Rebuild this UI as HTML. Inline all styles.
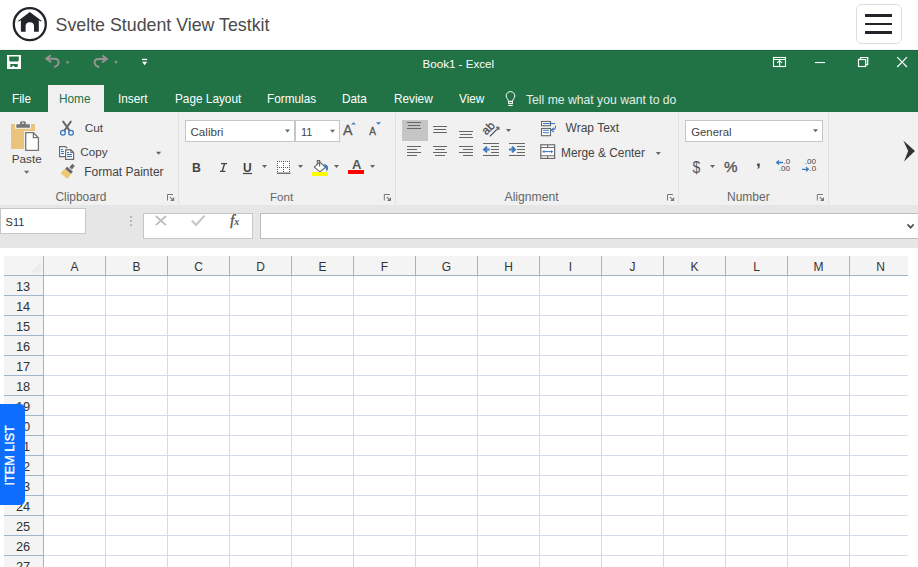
<!DOCTYPE html>
<html><head><meta charset="utf-8"><style>
html,body{margin:0;padding:0;width:918px;height:567px;overflow:hidden;background:#fff;position:relative;font-family:"Liberation Sans", sans-serif;}
.t{position:absolute;white-space:pre;line-height:1;font-family:"Liberation Sans", sans-serif;}
svg{overflow:visible}
</style></head><body>
<svg style="position:absolute;left:12px;top:7px" width="36" height="36" viewBox="0 0 36 36"><circle cx="17.8" cy="17.2" r="16" fill="none" stroke="#212529" stroke-width="2.3"/><path d="M5.6 14.2 L17.8 5 L30.2 14.2 L28.2 14.2 L26.8 13.2 L26.8 24.8 L22 24.8 L22 19 Q22 15.2 17.8 15.2 Q13.6 15.2 13.6 19 L13.6 24.8 L8.9 24.8 L8.9 13.2 L7.4 14.2 Z" fill="#212529"/></svg>
<div class="t" style="left:55.6px;top:16.93px;font-size:17.8px;color:#4a4a4a;">Svelte Student View Testkit</div>
<div style="position:absolute;left:856px;top:4px;width:44px;height:38px;border:1px solid #dcdcdc;border-radius:6px;"></div>
<div style="position:absolute;left:865px;top:14.0px;width:27px;height:2.6px;background:#212529;"></div>
<div style="position:absolute;left:865px;top:22.5px;width:27px;height:2.6px;background:#212529;"></div>
<div style="position:absolute;left:865px;top:30.999999999999996px;width:27px;height:2.6px;background:#212529;"></div>
<div style="position:absolute;left:0px;top:50px;width:918px;height:62px;background:#217346;"></div>
<div style="position:absolute;left:0px;top:50px;width:918px;height:1px;background:#1b6a3d;"></div>
<div style="position:absolute;left:0px;top:49px;width:918px;height:1px;background:#f3f3f6;"></div>
<div class="t" style="left:422.5px;top:57.78px;font-size:11.6px;color:#fff;">Book1 - Excel</div>
<div style="position:absolute;left:48px;top:85px;width:56px;height:27px;background:#f1f1f1;"></div>
<div class="t" style="left:11.7px;top:93.38px;font-size:12.9px;color:#fff;transform:scaleX(0.915);transform-origin:0 0;">File</div>
<div class="t" style="left:58.7px;top:93.38px;font-size:12.9px;color:#217346;transform:scaleX(0.915);transform-origin:0 0;">Home</div>
<div class="t" style="left:117.7px;top:93.38px;font-size:12.9px;color:#fff;transform:scaleX(0.915);transform-origin:0 0;">Insert</div>
<div class="t" style="left:174.7px;top:93.38px;font-size:12.9px;color:#fff;transform:scaleX(0.915);transform-origin:0 0;">Page Layout</div>
<div class="t" style="left:266.7px;top:93.38px;font-size:12.9px;color:#fff;transform:scaleX(0.915);transform-origin:0 0;">Formulas</div>
<div class="t" style="left:341.7px;top:93.38px;font-size:12.9px;color:#fff;transform:scaleX(0.915);transform-origin:0 0;">Data</div>
<div class="t" style="left:393.7px;top:93.38px;font-size:12.9px;color:#fff;transform:scaleX(0.915);transform-origin:0 0;">Review</div>
<div class="t" style="left:458.5px;top:93.38px;font-size:12.9px;color:#fff;transform:scaleX(0.915);transform-origin:0 0;">View</div>
<div class="t" style="left:526.0px;top:93.87px;font-size:12.2px;color:#e3ede7;">Tell me what you want to do</div>
<div style="position:absolute;left:0px;top:112px;width:918px;height:93px;background:#f1f1f1;"></div>
<div style="position:absolute;left:178px;top:113px;width:1px;height:91px;background:#e1e1e1;"></div>
<div style="position:absolute;left:395px;top:113px;width:1px;height:91px;background:#e1e1e1;"></div>
<div style="position:absolute;left:678px;top:113px;width:1px;height:91px;background:#e1e1e1;"></div>
<div style="position:absolute;left:828px;top:113px;width:1px;height:91px;background:#e1e1e1;"></div>
<div class="t" style="left:55.5px;top:191.83px;font-size:11.9px;color:#666;">Clipboard</div>
<div class="t" style="left:270.0px;top:190.88px;font-size:11.6px;color:#666;">Font</div>
<div class="t" style="left:504.5px;top:190.57px;font-size:12.2px;color:#666;">Alignment</div>
<div class="t" style="left:727.0px;top:190.94px;font-size:12px;color:#666;">Number</div>
<div class="t" style="left:11.8px;top:152.90px;font-size:11.7px;color:#444;">Paste</div>
<div class="t" style="left:84.7px;top:122.81px;font-size:11.8px;color:#444;">Cut</div>
<div class="t" style="left:80.3px;top:145.70px;font-size:11.7px;color:#444;">Copy</div>
<div class="t" style="left:84.2px;top:165.54px;font-size:12px;color:#444;">Format Painter</div>
<div style="position:absolute;left:185px;top:120px;width:110px;height:22px;background:#fff;border:1px solid #c6c6c6;box-sizing:border-box;"></div>
<div style="position:absolute;left:295px;top:120px;width:45px;height:22px;background:#fff;border:1px solid #c6c6c6;box-sizing:border-box;"></div>
<div class="t" style="left:190.5px;top:125.98px;font-size:11.6px;color:#444;">Calibri</div>
<div class="t" style="left:301.0px;top:127.09px;font-size:11px;color:#444;">11</div>
<div class="t" style="left:565.6px;top:121.84px;font-size:12px;color:#444;">Wrap Text</div>
<div class="t" style="left:561.0px;top:147.93px;font-size:11.9px;color:#444;">Merge &amp; Center</div>
<div style="position:absolute;left:685px;top:120px;width:138px;height:22px;background:#fff;border:1px solid #c6c6c6;box-sizing:border-box;"></div>
<div class="t" style="left:691.3px;top:127.33px;font-size:11.3px;color:#444;">General</div>
<div style="position:absolute;left:0px;top:205px;width:918px;height:43px;background:#e6e6e6;"></div>
<div style="position:absolute;left:0px;top:208px;width:86px;height:26px;background:#fff;border:1px solid #c6c6c6;box-sizing:border-box;"></div>
<div class="t" style="left:5.6px;top:216.59px;font-size:11px;color:#333;">S11</div>
<div style="position:absolute;left:143px;top:213px;width:110px;height:26px;background:#fff;border:1px solid #c6c6c6;box-sizing:border-box;"></div>
<div style="position:absolute;left:260px;top:213px;width:670px;height:26px;background:#fff;border:1px solid #bdbdbd;box-sizing:border-box;"></div>
<div style="position:absolute;left:4px;top:256px;width:904px;height:20px;background:#f4f4f4;"></div>
<div style="position:absolute;left:4px;top:276px;width:40px;height:300px;background:#f4f4f4;"></div>
<div style="position:absolute;left:4px;top:275px;width:904px;height:1px;background:#9fb5cf;"></div>
<div style="position:absolute;left:4px;top:295px;width:40px;height:1px;background:#9fb5cf;"></div>
<div style="position:absolute;left:44px;top:295px;width:864px;height:1px;background:#d3dbe7;"></div>
<div style="position:absolute;left:4px;top:315px;width:40px;height:1px;background:#9fb5cf;"></div>
<div style="position:absolute;left:44px;top:315px;width:864px;height:1px;background:#d3dbe7;"></div>
<div style="position:absolute;left:4px;top:335px;width:40px;height:1px;background:#9fb5cf;"></div>
<div style="position:absolute;left:44px;top:335px;width:864px;height:1px;background:#d3dbe7;"></div>
<div style="position:absolute;left:4px;top:355px;width:40px;height:1px;background:#9fb5cf;"></div>
<div style="position:absolute;left:44px;top:355px;width:864px;height:1px;background:#d3dbe7;"></div>
<div style="position:absolute;left:4px;top:375px;width:40px;height:1px;background:#9fb5cf;"></div>
<div style="position:absolute;left:44px;top:375px;width:864px;height:1px;background:#d3dbe7;"></div>
<div style="position:absolute;left:4px;top:395px;width:40px;height:1px;background:#9fb5cf;"></div>
<div style="position:absolute;left:44px;top:395px;width:864px;height:1px;background:#d3dbe7;"></div>
<div style="position:absolute;left:4px;top:415px;width:40px;height:1px;background:#9fb5cf;"></div>
<div style="position:absolute;left:44px;top:415px;width:864px;height:1px;background:#d3dbe7;"></div>
<div style="position:absolute;left:4px;top:435px;width:40px;height:1px;background:#9fb5cf;"></div>
<div style="position:absolute;left:44px;top:435px;width:864px;height:1px;background:#d3dbe7;"></div>
<div style="position:absolute;left:4px;top:455px;width:40px;height:1px;background:#9fb5cf;"></div>
<div style="position:absolute;left:44px;top:455px;width:864px;height:1px;background:#d3dbe7;"></div>
<div style="position:absolute;left:4px;top:475px;width:40px;height:1px;background:#9fb5cf;"></div>
<div style="position:absolute;left:44px;top:475px;width:864px;height:1px;background:#d3dbe7;"></div>
<div style="position:absolute;left:4px;top:495px;width:40px;height:1px;background:#9fb5cf;"></div>
<div style="position:absolute;left:44px;top:495px;width:864px;height:1px;background:#d3dbe7;"></div>
<div style="position:absolute;left:4px;top:515px;width:40px;height:1px;background:#9fb5cf;"></div>
<div style="position:absolute;left:44px;top:515px;width:864px;height:1px;background:#d3dbe7;"></div>
<div style="position:absolute;left:4px;top:535px;width:40px;height:1px;background:#9fb5cf;"></div>
<div style="position:absolute;left:44px;top:535px;width:864px;height:1px;background:#d3dbe7;"></div>
<div style="position:absolute;left:4px;top:555px;width:40px;height:1px;background:#9fb5cf;"></div>
<div style="position:absolute;left:44px;top:555px;width:864px;height:1px;background:#d3dbe7;"></div>
<div style="position:absolute;left:43px;top:256px;width:1px;height:320px;background:#9fb5cf;"></div>
<div style="position:absolute;left:105px;top:256px;width:1px;height:20px;background:#9fb5cf;"></div>
<div style="position:absolute;left:105px;top:276px;width:1px;height:300px;background:#d3dbe7;"></div>
<div style="position:absolute;left:167px;top:256px;width:1px;height:20px;background:#9fb5cf;"></div>
<div style="position:absolute;left:167px;top:276px;width:1px;height:300px;background:#d3dbe7;"></div>
<div style="position:absolute;left:229px;top:256px;width:1px;height:20px;background:#9fb5cf;"></div>
<div style="position:absolute;left:229px;top:276px;width:1px;height:300px;background:#d3dbe7;"></div>
<div style="position:absolute;left:291px;top:256px;width:1px;height:20px;background:#9fb5cf;"></div>
<div style="position:absolute;left:291px;top:276px;width:1px;height:300px;background:#d3dbe7;"></div>
<div style="position:absolute;left:353px;top:256px;width:1px;height:20px;background:#9fb5cf;"></div>
<div style="position:absolute;left:353px;top:276px;width:1px;height:300px;background:#d3dbe7;"></div>
<div style="position:absolute;left:415px;top:256px;width:1px;height:20px;background:#9fb5cf;"></div>
<div style="position:absolute;left:415px;top:276px;width:1px;height:300px;background:#d3dbe7;"></div>
<div style="position:absolute;left:477px;top:256px;width:1px;height:20px;background:#9fb5cf;"></div>
<div style="position:absolute;left:477px;top:276px;width:1px;height:300px;background:#d3dbe7;"></div>
<div style="position:absolute;left:539px;top:256px;width:1px;height:20px;background:#9fb5cf;"></div>
<div style="position:absolute;left:539px;top:276px;width:1px;height:300px;background:#d3dbe7;"></div>
<div style="position:absolute;left:601px;top:256px;width:1px;height:20px;background:#9fb5cf;"></div>
<div style="position:absolute;left:601px;top:276px;width:1px;height:300px;background:#d3dbe7;"></div>
<div style="position:absolute;left:663px;top:256px;width:1px;height:20px;background:#9fb5cf;"></div>
<div style="position:absolute;left:663px;top:276px;width:1px;height:300px;background:#d3dbe7;"></div>
<div style="position:absolute;left:725px;top:256px;width:1px;height:20px;background:#9fb5cf;"></div>
<div style="position:absolute;left:725px;top:276px;width:1px;height:300px;background:#d3dbe7;"></div>
<div style="position:absolute;left:787px;top:256px;width:1px;height:20px;background:#9fb5cf;"></div>
<div style="position:absolute;left:787px;top:276px;width:1px;height:300px;background:#d3dbe7;"></div>
<div style="position:absolute;left:849px;top:256px;width:1px;height:20px;background:#9fb5cf;"></div>
<div style="position:absolute;left:849px;top:276px;width:1px;height:300px;background:#d3dbe7;"></div>
<div class="t" style="left:54.5px;width:40px;text-align:center;top:260.74px;font-size:12px;color:#333">A</div>
<div class="t" style="left:116.5px;width:40px;text-align:center;top:260.74px;font-size:12px;color:#333">B</div>
<div class="t" style="left:178.5px;width:40px;text-align:center;top:260.74px;font-size:12px;color:#333">C</div>
<div class="t" style="left:240.5px;width:40px;text-align:center;top:260.74px;font-size:12px;color:#333">D</div>
<div class="t" style="left:302.5px;width:40px;text-align:center;top:260.74px;font-size:12px;color:#333">E</div>
<div class="t" style="left:364.5px;width:40px;text-align:center;top:260.74px;font-size:12px;color:#333">F</div>
<div class="t" style="left:426.5px;width:40px;text-align:center;top:260.74px;font-size:12px;color:#333">G</div>
<div class="t" style="left:488.5px;width:40px;text-align:center;top:260.74px;font-size:12px;color:#333">H</div>
<div class="t" style="left:550.5px;width:40px;text-align:center;top:260.74px;font-size:12px;color:#333">I</div>
<div class="t" style="left:612.5px;width:40px;text-align:center;top:260.74px;font-size:12px;color:#333">J</div>
<div class="t" style="left:674.5px;width:40px;text-align:center;top:260.74px;font-size:12px;color:#333">K</div>
<div class="t" style="left:736.5px;width:40px;text-align:center;top:260.74px;font-size:12px;color:#333">L</div>
<div class="t" style="left:798.5px;width:40px;text-align:center;top:260.74px;font-size:12px;color:#333">M</div>
<div class="t" style="left:860.5px;width:40px;text-align:center;top:260.74px;font-size:12px;color:#333">N</div>
<div class="t" style="left:3px;width:40px;text-align:center;top:281.06px;font-size:12.8px;color:#333">13</div>
<div class="t" style="left:3px;width:40px;text-align:center;top:301.06px;font-size:12.8px;color:#333">14</div>
<div class="t" style="left:3px;width:40px;text-align:center;top:321.06px;font-size:12.8px;color:#333">15</div>
<div class="t" style="left:3px;width:40px;text-align:center;top:341.06px;font-size:12.8px;color:#333">16</div>
<div class="t" style="left:3px;width:40px;text-align:center;top:361.06px;font-size:12.8px;color:#333">17</div>
<div class="t" style="left:3px;width:40px;text-align:center;top:381.06px;font-size:12.8px;color:#333">18</div>
<div class="t" style="left:3px;width:40px;text-align:center;top:401.06px;font-size:12.8px;color:#333">19</div>
<div class="t" style="left:3px;width:40px;text-align:center;top:421.06px;font-size:12.8px;color:#333">20</div>
<div class="t" style="left:3px;width:40px;text-align:center;top:441.06px;font-size:12.8px;color:#333">21</div>
<div class="t" style="left:3px;width:40px;text-align:center;top:461.06px;font-size:12.8px;color:#333">22</div>
<div class="t" style="left:3px;width:40px;text-align:center;top:481.06px;font-size:12.8px;color:#333">23</div>
<div class="t" style="left:3px;width:40px;text-align:center;top:501.06px;font-size:12.8px;color:#333">24</div>
<div class="t" style="left:3px;width:40px;text-align:center;top:521.06px;font-size:12.8px;color:#333">25</div>
<div class="t" style="left:3px;width:40px;text-align:center;top:541.06px;font-size:12.8px;color:#333">26</div>
<div class="t" style="left:3px;width:40px;text-align:center;top:561.06px;font-size:12.8px;color:#333">27</div>
<div class="t" style="left:191.9px;top:162.19px;font-size:12.3px;color:#444;font-weight:bold;">B</div>
<div class="t" style="left:242.9px;top:161.64px;font-size:12px;color:#444;font-weight:bold;">U</div>
<div class="t" style="left:343.1px;top:122.78px;font-size:14.2px;color:#555;-webkit-text-stroke:0.3px #555;">A</div>
<div class="t" style="left:369.2px;top:127.03px;font-size:10px;color:#555;-webkit-text-stroke:0.3px #555;">A</div>
<div class="t" style="left:352.0px;top:158.30px;font-size:13px;color:#555;font-weight:bold;">A</div>
<div class="t" style="left:692.4px;top:160.55px;font-size:14px;color:#555;transform:scaleY(1.15);transform-origin:50% 85%;">$</div>
<div class="t" style="left:724.0px;top:159.23px;font-size:15.2px;color:#555;-webkit-text-stroke:0.35px #555;">%</div>
<div class="t" style="left:756.0px;top:152.01px;font-size:17px;color:#444;font-weight:bold;">,</div>
<div class="t" style="left:783.5px;top:157.83px;font-size:8px;color:#444;">.0</div>
<div class="t" style="left:778.8px;top:164.93px;font-size:8px;color:#444;">.00</div>
<div class="t" style="left:804.8px;top:157.83px;font-size:8px;color:#444;">.00</div>
<div class="t" style="left:809.6px;top:164.93px;font-size:8px;color:#444;">.0</div>
<div class="t" style="left:230.3px;top:214.15px;font-size:14px;color:#555;font-family:'Liberation Serif',serif;-webkit-text-stroke:0.45px #555;"><i>f</i></div>
<div class="t" style="left:234.2px;top:216.53px;font-size:10px;color:#555;font-family:'Liberation Serif',serif;font-weight:bold;"><i>x</i></div>
<svg style="position:absolute;left:0;top:0" width="918" height="567" viewBox="0 0 918 567"><path fill-rule="evenodd" fill="#fff" d="M7 55H21V69H7Z M9.2 56.6H18.8V60.6L17.9 61.5H10.1L9.2 60.6Z M10.3 64H17.7V67H14.3V65.8H12.3V67H10.3Z"/><path d="M46.5 58.7H55Q58.6 58.7 58.6 62.4Q58.6 65.6 54 67" fill="none" stroke="#9a9296" stroke-width="2"/><path d="M50.8 55.3L46.4 58.7L51.2 62.3" fill="none" stroke="#9a9296" stroke-width="2"/><g transform="matrix(-1 0 0 1 153.2 0.2)"><path d="M46.5 58.7H55Q58.6 58.7 58.6 62.4Q58.6 65.6 54 67" fill="none" stroke="#9a9296" stroke-width="2"/><path d="M50.8 55.3L46.4 58.7L51.2 62.3" fill="none" stroke="#9a9296" stroke-width="2"/></g><path d="M66 61.3H69.2L67.6 64.6Z" fill="#9a9296"/><path d="M114.4 61H117.80000000000001L116.10000000000001 64Z" fill="#9a9296"/><rect x="142" y="58.8" width="5.2" height="1.3" fill="#fff"/><path d="M142 61.8H147.2L144.6 65.2Z" fill="#fff"/><rect x="773.5" y="57.5" width="12" height="9" fill="none" stroke="#fff" stroke-width="1.1"/><path d="M773.5 59.5H785.5M779.6 60.5V66.5M777.2 62.8L779.6 60.5L782 62.8" fill="none" stroke="#fff" stroke-width="1.1"/><rect x="815" y="62" width="10" height="1.1" fill="#fff"/><rect x="858.5" y="59.5" width="7.2" height="7" fill="none" stroke="#fff" stroke-width="1.2"/><path d="M860.5 59.3V57.5H867.7V64.6H865.9" fill="none" stroke="#fff" stroke-width="1.2"/><path d="M897.2 57.2L907 67M907 57.2L897.2 67" stroke="#fff" stroke-width="1.2"/><path d="M508.6 101.3C508.2 99.4 506.2 97.8 506.2 95.9A4.3 4.3 0 1 1 514.8 95.9C514.8 97.8 512.8 99.4 512.4 101.3Z" fill="none" stroke="#fff" stroke-width="1"/><rect x="508.6" y="101.6" width="3.8" height="2" fill="none" stroke="#fff" stroke-width="1"/><path d="M508.3 105.5H512.7" stroke="#fff" stroke-width="1.1"/><rect x="11" y="124" width="24" height="25" rx="1.2" fill="#ebc47c"/><rect x="15" y="122" width="16" height="6.8" fill="#f1f1f1"/><rect x="16.3" y="124.3" width="13.6" height="3.5" rx="0.6" fill="#757575"/><rect x="20" y="121.2" width="5.8" height="4" rx="1.6" fill="#757575"/><circle cx="22.9" cy="123.2" r="0.9" fill="#f1f1f1"/><rect x="24" y="131" width="16.3" height="21" fill="#f1f1f1"/><path d="M25.7 132.7H33.4L38.4 137.7V150.4H25.7Z" fill="#fff" stroke="#767676" stroke-width="1.3"/><path d="M33.4 132.7V137.7H38.4" fill="none" stroke="#767676" stroke-width="1.3"/><path d="M24 170.8H29.3L26.65 173.8Z" fill="#666"/><path d="M63.2 121.6L69.6 130.6M70.8 121.6L64.4 130.6" stroke="#676767" stroke-width="1.9" stroke-linecap="round"/><circle cx="62.9" cy="132.8" r="2.35" fill="none" stroke="#3b79c2" stroke-width="1.3"/><circle cx="71" cy="132.8" r="2.35" fill="none" stroke="#3b79c2" stroke-width="1.3"/><path d="M65.5 156.6H59.6V146.6H65.5L67.3 148.4" fill="#fff" stroke="#6a6a6a" stroke-width="1.2"/><path d="M65.6 149.8H70.9L73.6 152.5V159.3H65.6Z" fill="#fff" stroke="#6a6a6a" stroke-width="1.2"/><path d="M70.9 149.8V152.5H73.6" fill="none" stroke="#6a6a6a" stroke-width="1.2"/><rect x="61" y="149" width="2.200000000000003" height="1.1" fill="#3b79c2"/><rect x="61" y="151" width="3" height="1.1" fill="#3b79c2"/><rect x="61" y="153" width="3" height="1.1" fill="#3b79c2"/><rect x="67" y="152" width="2" height="1.1" fill="#3b79c2"/><rect x="67" y="154" width="5" height="1.1" fill="#3b79c2"/><rect x="67" y="156" width="5" height="1.1" fill="#3b79c2"/><path d="M156 151.8H161.2L158.6 154.8Z" fill="#666"/><g transform="rotate(40 69 170.3)"><rect x="67.4" y="163.2" width="3.2" height="4.6" fill="#6a6a6a"/><rect x="65.2" y="168.8" width="7.6" height="3.1" fill="#6a6a6a"/><path d="M64.6 172.4H73.2V178.2L72.1 177.6L71 178.2L69.9 177.6L68.8 178.2L67.7 177.6L66.6 178.2L65.5 177.6L64.6 178.2Z" fill="#f0c66c"/></g><path d="M167.5 200.5V194.5H173" fill="none" stroke="#777" stroke-width="1"/><path d="M170 197.2L173 200.2" stroke="#777" stroke-width="1.1"/><path d="M174.2 197V201H170.2Z" fill="#777"/><path d="M285 129.5H290L287.5 132.5Z" fill="#666"/><path d="M330 129.7H335L332.5 132.7Z" fill="#666"/><path d="M351 124.6H356L353.5 122.2Z" fill="#3b79c2"/><path d="M376 122.2H381L378.5 124.8Z" fill="#3b79c2"/><path d="M221 163.6H227M220 171.4H225.3M224.6 163.6L222.2 171.4" fill="none" stroke="#444" stroke-width="1.4"/><rect x="243" y="172.9" width="9" height="1.2" fill="#444"/><path d="M262 165H267L264.5 168Z" fill="#666"/><path d="M298 165H303L300.5 168Z" fill="#666"/><path d="M334 165.1H339L336.5 168.1Z" fill="#666"/><path d="M370 165.1H375L372.5 168.1Z" fill="#666"/><rect x="277" y="161" width="13.5" height="12" fill="#fff"/><rect x="277" y="161" width="1" height="1" fill="#555"/><rect x="277" y="163" width="1" height="1" fill="#555"/><rect x="277" y="165" width="1" height="1" fill="#555"/><rect x="277" y="167" width="1" height="1" fill="#555"/><rect x="277" y="169" width="1" height="1" fill="#555"/><rect x="277" y="171" width="1" height="1" fill="#555"/><rect x="279" y="161" width="1" height="1" fill="#555"/><rect x="279" y="167" width="1" height="1" fill="#555"/><rect x="281" y="161" width="1" height="1" fill="#555"/><rect x="281" y="167" width="1" height="1" fill="#555"/><rect x="283" y="161" width="1" height="1" fill="#555"/><rect x="283" y="163" width="1" height="1" fill="#555"/><rect x="283" y="165" width="1" height="1" fill="#555"/><rect x="283" y="167" width="1" height="1" fill="#555"/><rect x="283" y="169" width="1" height="1" fill="#555"/><rect x="283" y="171" width="1" height="1" fill="#555"/><rect x="285" y="161" width="1" height="1" fill="#555"/><rect x="285" y="167" width="1" height="1" fill="#555"/><rect x="287" y="161" width="1" height="1" fill="#555"/><rect x="287" y="167" width="1" height="1" fill="#555"/><rect x="289" y="161" width="1" height="1" fill="#555"/><rect x="289" y="163" width="1" height="1" fill="#555"/><rect x="289" y="165" width="1" height="1" fill="#555"/><rect x="289" y="167" width="1" height="1" fill="#555"/><rect x="289" y="169" width="1" height="1" fill="#555"/><rect x="289" y="171" width="1" height="1" fill="#555"/><rect x="277" y="172.6" width="13.5" height="1.2" fill="#555"/><path d="M314.3 167.1L319.8 162.1L325.6 167.3L319.9 171.9Z" fill="#fff" stroke="#666" stroke-width="1.1"/><path d="M319.6 166.5V160.6H317.3V164" fill="none" stroke="#666" stroke-width="1.1"/><path d="M324.4 164C328.6 164.8 329.2 169 326.6 171.6C326.2 169.4 325.6 167.2 324.2 165.8Z" fill="#3b79c2"/><rect x="312" y="172" width="16" height="4" fill="#ffff00"/><rect x="348" y="170" width="16" height="4" fill="#ff0000"/><path d="M384.3 200.5V194.5H389.8" fill="none" stroke="#777" stroke-width="1"/><path d="M386.8 197.2L389.8 200.2" stroke="#777" stroke-width="1.1"/><path d="M391.0 197V201H387.0Z" fill="#777"/><rect x="402" y="120" width="26" height="21" fill="#c5c5c5"/><rect x="407" y="122" width="14" height="1" fill="#666"/><rect x="408" y="125" width="12" height="1" fill="#666"/><rect x="407" y="128" width="14" height="1" fill="#666"/><rect x="433" y="126" width="14" height="1" fill="#666"/><rect x="434" y="129" width="12" height="1" fill="#666"/><rect x="433" y="132" width="14" height="1" fill="#666"/><rect x="459" y="131" width="14" height="1" fill="#666"/><rect x="460" y="134" width="12" height="1" fill="#666"/><rect x="459" y="137" width="14" height="1" fill="#666"/><rect x="407" y="146" width="14" height="1" fill="#666"/><rect x="407" y="149" width="10" height="1" fill="#666"/><rect x="407" y="152" width="14" height="1" fill="#666"/><rect x="407" y="155" width="10" height="1" fill="#666"/><rect x="433" y="146" width="14" height="1" fill="#666"/><rect x="435" y="149" width="10" height="1" fill="#666"/><rect x="433" y="152" width="14" height="1" fill="#666"/><rect x="435" y="155" width="10" height="1" fill="#666"/><rect x="459" y="146" width="14" height="1" fill="#666"/><rect x="463" y="149" width="10" height="1" fill="#666"/><rect x="459" y="152" width="14" height="1" fill="#666"/><rect x="463" y="155" width="10" height="1" fill="#666"/><text x="0" y="0" transform="translate(486.3 135.6) rotate(-45)" font-family="Liberation Sans" font-size="11.8" fill="#4a4a4a" stroke="#4a4a4a" stroke-width="0.25">ab</text><path d="M489.9 136.3L498.6 127.6" stroke="#4a4a4a" stroke-width="1.2"/><path d="M496 127.2H498.9V130.1" fill="none" stroke="#4a4a4a" stroke-width="1"/><path d="M506 129H511L508.5 132Z" fill="#666"/><rect x="483" y="143" width="16" height="1" fill="#666"/><rect x="491" y="146" width="8" height="1" fill="#666"/><rect x="491" y="149" width="8" height="1" fill="#666"/><rect x="491" y="152" width="8" height="1" fill="#666"/><rect x="483" y="155" width="16" height="1" fill="#666"/><rect x="509" y="143" width="16" height="1" fill="#666"/><rect x="517" y="146" width="8" height="1" fill="#666"/><rect x="517" y="149" width="8" height="1" fill="#666"/><rect x="517" y="152" width="8" height="1" fill="#666"/><rect x="509" y="155" width="16" height="1" fill="#666"/><path d="M489.7 149.5H484.5M487 146.6L484.1 149.5L487 152.4" fill="none" stroke="#3b79c2" stroke-width="2"/><path d="M509 149.5H514.5M512 146.6L514.9 149.5L512 152.4" fill="none" stroke="#3b79c2" stroke-width="2"/><rect x="541.5" y="121.5" width="9" height="4.2" fill="#fff" stroke="#6a6a6a" stroke-width="1.1"/><rect x="541.5" y="128.5" width="9" height="7.2" fill="#fff" stroke="#6a6a6a" stroke-width="1.1"/><rect x="543" y="123" width="12" height="1.1" fill="#3b79c2"/><rect x="543" y="129.8" width="6" height="1" fill="#3b79c2"/><rect x="543" y="132.2" width="6" height="1" fill="#3b79c2"/><path d="M555.5 125.6Q556 130 551.5 130" fill="none" stroke="#3b79c2" stroke-width="1.1"/><path d="M553.8 127.8L551.2 130L553.8 132.2" fill="none" stroke="#3b79c2" stroke-width="1.1"/><rect x="540.8" y="144.8" width="13.8" height="13.6" fill="#fff" stroke="#6a6a6a" stroke-width="1.2"/><path d="M540.8 147.5H554.6M540.8 155.8H554.6M547.7 144.8V147.5M547.7 155.8V158.4" stroke="#6a6a6a" stroke-width="1.1"/><path d="M542.6 151.6H552.8" stroke="#3b79c2" stroke-width="1.1"/><path d="M544.4 150L542.4 151.6L544.4 153.2Z M551 150L553 151.6L551 153.2Z" fill="#3b79c2"/><path d="M655.8 152H660.8L658.3 155Z" fill="#666"/><path d="M667.5 200.5V194.5H673" fill="none" stroke="#777" stroke-width="1"/><path d="M670 197.2L673 200.2" stroke="#777" stroke-width="1.1"/><path d="M674.2 197V201H670.2Z" fill="#777"/><path d="M813 129.3H818L815.5 132.3Z" fill="#666"/><path d="M710 165H715L712.5 168Z" fill="#666"/><path d="M817.3 200.5V194.5H822.8" fill="none" stroke="#777" stroke-width="1"/><path d="M819.8 197.2L822.8 200.2" stroke="#777" stroke-width="1.1"/><path d="M824.0 197V201H820.0Z" fill="#777"/><path d="M783 162.5H777M779 160.5L776.6 162.5L779 164.5" fill="none" stroke="#3b79c2" stroke-width="1.3"/><path d="M802 169.3H808M806 167.3L808.4 169.3L806 171.3" fill="none" stroke="#3b79c2" stroke-width="1.3"/><path d="M903.3 140.6L915 151L904 161.4L908.2 151Z" fill="#333"/><rect x="130.2" y="216.2" width="1.5" height="1.6" fill="#999"/><rect x="130.2" y="220.2" width="1.5" height="1.6" fill="#999"/><rect x="130.2" y="224.3" width="1.5" height="1.6" fill="#999"/><path d="M155.8 216L166 225.2M166 216L155.8 225.2" stroke="#bdbdbd" stroke-width="1.8"/><path d="M191.8 220.8L196 225L204.6 215.6" fill="none" stroke="#c4c4c4" stroke-width="2"/><path d="M907.5 224.4L910.6 227.6L913.7 224.4" fill="none" stroke="#555" stroke-width="1.8"/><path d="M41 261.5V272.5H30Z" fill="#ececec"/></svg>
<div style="position:absolute;left:0;top:404px;width:25px;height:101px;background:#0d6efd;border-radius:0 5px 5px 0;"></div>
<div class="t" style="left:-28px;top:448.5px;width:76px;text-align:center;font-size:12.6px;color:#fff;-webkit-text-stroke:0.35px #fff;transform:rotate(-90deg);">ITEM LIST</div>
</body></html>
